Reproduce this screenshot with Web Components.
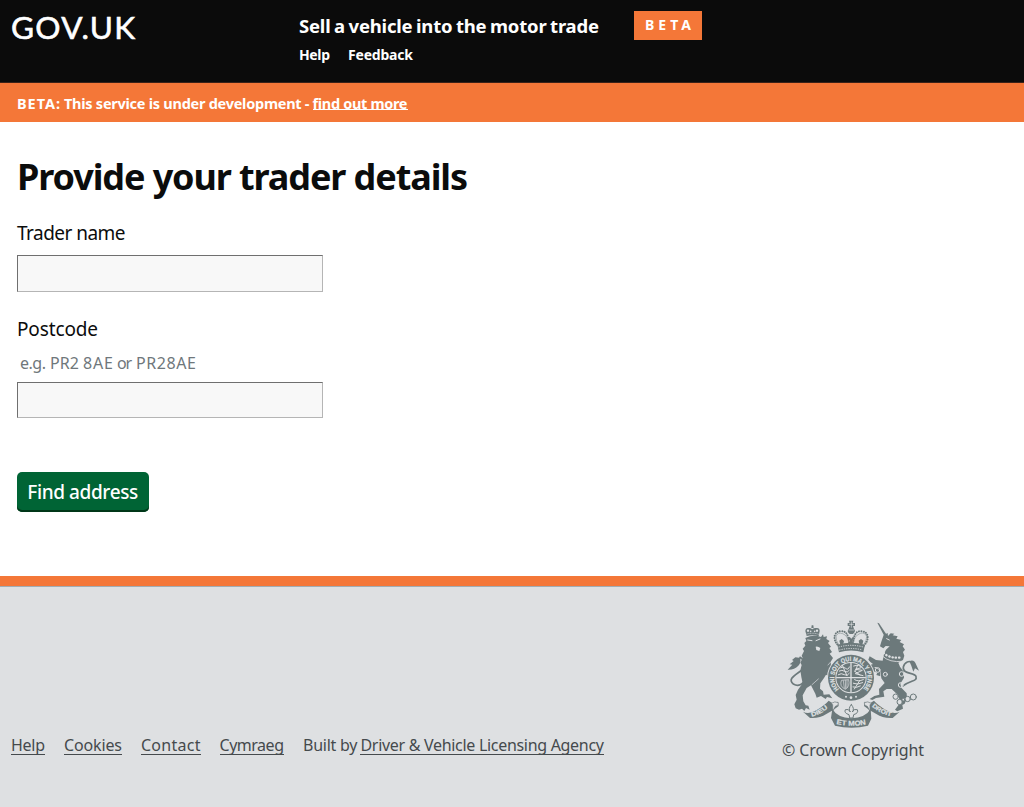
<!DOCTYPE html>
<html lang="en">
<head>
<meta charset="utf-8">
<title>Provide your trader details</title>
<style>
html,body{margin:0;height:100%}
body{font-family:"Noto Sans","Open Sans",sans-serif;color:#0b0c0c;background:#fff;overflow:hidden}
</style>
</head>
<body>
<trader-page></trader-page>
<script>
const define = (name, html, ready) => {
  const t = document.createElement('template');
  t.innerHTML = html;
  customElements.define(name, class extends HTMLElement {
    constructor() {
      super();
      this.attachShadow({mode: 'open'}).append(t.content.cloneNode(true));
    }
    connectedCallback() { if (ready) ready(this); }
  });
};

/* Text tracked so that the line fills the given measure. */
define('fit-text', `<style>:host{display:inline-block;white-space:nowrap}span{display:inline-block;white-space:pre}</style><span><slot></slot></span>`, el => {
  const w = +el.getAttribute('measure'), span = el.shadowRoot.querySelector('span');
  const natural = span.getBoundingClientRect().width;
  const n = el.textContent.length;
  const ls = (w - natural) / (n - 1);
  span.style.letterSpacing = ls + 'px';
  span.style.marginRight = -ls + 'px';
});

define('gov-header', `<style>
:host{display:grid;grid-template-columns:288px 335px 1fr;height:82px;background:#0b0b0b;color:#fff;padding-left:11px;border-bottom:1px solid #3a2118;box-sizing:content-box}
.logo{font:400 31.5px/55px Lato,sans-serif;-webkit-text-stroke:.6px #fff}
.name{font-weight:700;font-size:18.5px;line-height:52px;height:41px;word-spacing:-1px}
nav{display:flex;gap:18px;font-size:14px;line-height:27px;font-weight:700}
.tag{width:68px;height:29px;margin-top:11px;background:#f47738;display:flex;justify-content:center;font-size:14px;font-weight:700;line-height:28px}
</style>
<div class="logo"><fit-text measure="124">GOV.UK</fit-text></div>
<div><div class="name"><fit-text measure="300">Sell a vehicle into the motor trade</fit-text></div>
<nav><fit-text measure="31">Help</fit-text><fit-text measure="65">Feedback</fit-text></nav></div>
<div class="tag"><fit-text measure="46">BETA</fit-text></div>`);

define('beta-banner', `<style>
:host{display:flex;gap:4px;height:39px;padding-left:17px;background:#f47738;color:#fff;font-size:14.5px;font-weight:700;line-height:41px}
fit-text.link{height:26px;border-bottom:1px solid #fff;margin-left:-1px}
</style><fit-text measure="43">BETA:</fit-text><fit-text measure="245.5">This service is under development -</fit-text><fit-text class="link" measure="95">find out more</fit-text>`);

define('form-field', `<style>
:host{display:block}
.label{font-size:19px;line-height:26px;height:35px}
.hint{display:none;font-size:16px;line-height:26px;color:#6f777b;padding-left:3px;height:32px}
:host([hinted]) .hint{display:block}
:host([hinted]) .label{height:34px}
input{display:block;box-sizing:border-box;width:306px;height:37px;margin:0;border:1px solid;border-color:#6f6f6f #b5b5b5 #b5b5b5 #6f6f6f;border-radius:0;background:#f8f8f8;outline:0}
:host([hinted]) input{height:36px}
</style><div class="label"><slot></slot></div><div class="hint"><slot name="hint"></slot></div><input type="text">`);

define('submit-button', `<style>
:host{display:block}
button{display:block;width:131.5px;height:40px;margin:0;padding:0;border:0;border-radius:5px;background:#006435;box-shadow:inset 0 -2px #003618;color:#fff;font:500 19px/39px "Noto Sans",sans-serif}
</style><button type="button"><slot></slot></button>`);

define('trader-form', `<style>
:host{display:block;height:454px;box-sizing:border-box;padding:32px 0 0 17px}
h1{margin:0 0 18px;font-size:36px;font-weight:700;line-height:46px;height:46px}
form-field+form-field{margin-top:24px}
submit-button{margin-top:54px}
.hint{display:flex;gap:4px}
</style>
<h1><fit-text measure="451">Provide your trader details</fit-text></h1>
<form-field style="padding-top:2px"><fit-text measure="108.5">Trader name</fit-text></form-field>
<form-field hinted><fit-text measure="81">Postcode</fit-text><div class="hint" slot="hint"><fit-text measure="26">e.g.</fit-text><fit-text measure="29">PR2</fit-text><fit-text measure="30">8AE</fit-text><fit-text measure="15">or</fit-text><fit-text measure="60">PR28AE</fit-text></div></form-field>
<submit-button><fit-text measure="111">Find address</fit-text></submit-button>`);

define('royal-crest', `<style>:host{display:block;width:135px;height:111.667px}svg{display:block;width:100%;height:100%;overflow:visible}
text{font-family:"Liberation Sans",sans-serif;font-weight:700;fill:#dee0e2;stroke:#dee0e2;stroke-width:.6px}</style>
<svg viewBox="45 145 405 335" fill="#6c797b" stroke-linecap="round" stroke-linejoin="round">
<defs><path id="ring" d="M207 358.7A50 50 0 1 1 279 358.7"/><path id="sl" d="M125 441Q156 434 180 409"/><path id="sm" d="M199 463Q244 473 292 463"/><path id="sr" d="M305 410Q334 436 371 441"/></defs>
<!-- lion -->
<g>
<path d="M110 199L106 184Q107 173 117 175Q122 175 127 179Q132 174 138 175Q149 173 149 184L146 200Q128 194 110 199ZM124 175L125 167H130L131 175Z"/>
<g fill="#dee0e2"><circle cx="114" cy="183" r="3.5"/><circle cx="122" cy="185" r="2.5"/><circle cx="134" cy="185" r="2.5"/><circle cx="141" cy="183" r="3.5"/></g>
<path d="M111 193Q128 188 146 194" fill="none" stroke="#dee0e2" stroke-width="2" stroke-dasharray="1 4"/>
<path d="M106 205Q130 193 153 202L159 194L161 202L171 200L169 208L179 214L174 220L183 231L178 235L186 247L179 252L189 265L182 276L184 302L193 312L202 331L196 349L187 340L180 321L168 315L162 325L151 341L150 357L159 365L161 375L178 374L187 386L171 382L167 388L153 379L140 384L136 372L123 347L110 355L98 377L100 395L107 407L115 408L119 420L108 415L103 424L96 417L87 420L77 416L73 404L80 390L77 376L84 360L98 341L94 322L91 302L95 286L91 279L98 265L95 258L102 244L98 237L106 228L103 220L109 214Z"/>
<path d="M106 326C100 347 83 351 70 343C51 328 77 316 94 302C109 286 103 270 90 263" fill="none" stroke="#6c797b" stroke-width="5"/>
<path d="M93 265L76 263L66 271L71 274L59 284L67 285L53 300Q73 301 85 288Q93 280 91 268Z"/>
<path d="M113 211L126 213M138 213L150 208" fill="none" stroke="#dee0e2" stroke-width="3"/>
<path d="M137 231Q144 229 151 235L148 244L139 241Z" fill="#dee0e2"/>
<path d="M181 278L174 286M126 345L145 328" fill="none" stroke="#dee0e2" stroke-width="2"/>
</g>
<!-- unicorn -->
<g>
<path d="M322 159L327 161L350 195L343 199Z"/>
<path d="M341 196L353 190L354 199L362 191L373 192L368 197L383 200L379 207L394 211L389 217L402 224L398 230L405 240L399 247L403 258L399 271L385 279L390 291L401 306L402 324L391 342L394 354L410 371L411 386L404 402L397 406L399 417L382 425L375 420L385 407L390 393L383 375L365 358L350 358L340 365L343 381L318 385L307 391L299 388L313 379L328 375L327 358L344 340L334 326L331 303L318 292L301 297L298 314L288 316L288 304L292 289L309 283L301 277L295 270L299 260L318 271L338 273L342 253L348 240L359 230L347 229L340 236L330 230L334 216Z"/>
<path d="M305 293Q324 294 330 306L331 320L319 316L322 309L306 303Z"/>
<path d="M341 250Q360 268 396 263" fill="none" stroke="#dee0e2" stroke-width="7" stroke-dasharray="1 9"/>
<path d="M337 259Q358 280 398 275" fill="none" stroke="#dee0e2" stroke-width="2.5"/><path d="M350 207L358 211" stroke="#dee0e2" stroke-width="3"/>
<path d="M398 349C425 330 442 336 438 320C433 307 397 315 400 292C403 277 419 270 428 281" fill="none" stroke="#6c797b" stroke-width="5"/>
<path d="M418 275Q432 267 439 286L447 303L435 296L430 306L424 288Z"/>
<g fill="none" stroke="#dee0e2" stroke-width="3"><circle cx="325" cy="257" r="7"/><circle cx="323" cy="301" r="7"/><circle cx="346" cy="314" r="6"/><circle cx="395" cy="313" r="7"/><circle cx="392" cy="346" r="7"/></g>
<g fill="#dee0e2" stroke="#6c797b" stroke-width="3"><circle cx="377" cy="381" r="8"/><circle cx="389" cy="397" r="8"/><circle cx="413" cy="388" r="8"/><circle cx="430" cy="382" r="9"/><circle cx="400" cy="390" r="4"/></g>
</g>
<!-- shield and garter -->
<circle cx="243" cy="324" r="72" fill="#dee0e2"/><circle cx="243" cy="324" r="69"/>
<circle cx="243" cy="324" r="47" fill="#dee0e2"/><circle cx="243" cy="324" r="44"/>
<g fill="none" stroke="#dee0e2">
<path d="M243 281V367M200 324H286" stroke-width="4"/>
<path d="M212 294Q219 289 227 296T238 292M208 304Q216 299 224 305T238 302M205 315Q214 309 223 315T238 311M217 287L231 318M254 330Q263 337 280 330M250 341Q262 347 278 339M249 352Q259 356 271 349M253 358L269 333" stroke-width="3"/>
<path d="M251 289Q269 283 274 294L256 299L277 302L256 312L279 318M253 304L270 316M262 288L257 304" stroke-width="3"/>
<path d="M214 333Q207 350 226 359Q241 350 236 331ZM220 333L223 355M226 332L227 357M231 332L231 354" stroke-width="2"/>
</g>
<text font-size="19"><textPath href="#ring" textLength="232" lengthAdjust="spacingAndGlyphs">HONI SOIT QUI MAL Y PENSE</textPath></text>
<circle cx="228" cy="381" r="3" fill="#dee0e2"/><circle cx="243" cy="384" r="4" fill="#dee0e2"/><circle cx="258" cy="381" r="3" fill="#dee0e2"/>
<!-- crown -->
<path d="M204 245Q191 223 190 203Q190 182 211 180Q233 177 242 191Q251 177 274 180Q297 182 298 203Q297 223 282 245Q244 234 204 245Z" fill="#dee0e2"/>
<path d="M207 230Q191 214 194 199Q198 184 214 185Q234 182 238 221M249 221Q252 182 273 185Q290 185 293 200Q295 214 280 230" fill="none" stroke="#6c797b" stroke-width="6" stroke-dasharray=".1 7"/>
<path d="M207 227Q196 211 198 199Q204 187 218 192Q233 197 237 221M250 221Q252 198 271 191Q284 187 290 200Q291 212 280 227" fill="none" stroke="#6c797b" stroke-width="1.5"/>
<path d="M236 178L239 169H233V160H239L237 153H250L248 160H255V169H249L252 178Q259 184 249 193H239Q229 186 236 178Z"/><path d="M238 164H250M244 157V173M237 181H251" stroke="#dee0e2" stroke-width="2"/>
<path d="M202 225Q242 213 285 225L280 248Q243 237 207 248Z"/><path d="M207 232Q243 222 280 232M209 241Q243 232 278 241" fill="none" stroke="#dee0e2" stroke-width="3" stroke-dasharray="1 6"/>
<path d="M239 222L240 211L233 207L239 201L244 207L249 201L255 207L248 211L249 222ZM211 225L208 213L215 208L222 214L220 222ZM268 222L266 213L273 208L280 213L277 225Z"/>
<!-- motto ribbon -->
<path d="M99 426Q116 435 139 422Q166 405 176 393L188 401L204 396L206 409L190 421L169 433Q149 447 120 445Z"/>
<path d="M389 426Q372 435 349 422Q322 405 312 393L300 401L284 396L282 409L298 421L319 433Q339 447 368 445Z"/>
<path d="M184 401Q195 393 205 399Q208 407 196 410L188 425V406Z M304 401Q293 393 283 399Q280 407 292 410L300 425V406Z" fill="#dee0e2" stroke="#6c797b" stroke-width="2"/>
<path d="M187 418Q202 444 244 446Q287 444 302 418L304 447L294 468Q245 480 195 468L183 445Z"/>
<text font-size="18"><textPath href="#sl" textLength="56" lengthAdjust="spacingAndGlyphs">DIEU</textPath></text><text font-size="21"><textPath href="#sm" textLength="90" lengthAdjust="spacingAndGlyphs">ET MON</textPath></text><text font-size="18"><textPath href="#sr" textLength="66" lengthAdjust="spacingAndGlyphs">DROIT</textPath></text>
<path d="M244 405Q255 417 247 427Q252 416 262 420Q267 430 251 435L249 445H239L237 435Q221 430 226 420Q236 416 241 427Q233 417 244 405Z" fill="#dee0e2" stroke="#6c797b" stroke-width="3"/>
</svg>`);

define('gov-footer', `<style>
:host{display:grid;grid-template-columns:771px 142px;height:220px;padding-left:11px;border-top:10px solid #f47738;background:#dee0e2;color:#454a4d;font-size:16px;box-shadow:inset 0 1px #a1acb2}
nav{display:flex;align-items:flex-start;padding-top:146px;line-height:26px}
nav fit-text{margin-right:19px;height:22px}
nav fit-text.u{border-bottom:1px solid #454a4d;line-height:26px}
nav fit-text.by{margin-right:3px}
royal-crest{margin:32px 0 0 3px}
.copy{margin-top:6px;line-height:28px}
</style>
<nav><fit-text class="u" measure="34">Help</fit-text><fit-text class="u" measure="58">Cookies</fit-text><fit-text class="u" measure="59.5">Contact</fit-text><fit-text class="u" measure="64.5">Cymraeg</fit-text><fit-text class="by" measure="54.5">Built by</fit-text><fit-text class="u" measure="243.5">Driver &amp; Vehicle Licensing Agency</fit-text></nav>
<div><royal-crest></royal-crest><div class="copy"><fit-text measure="142">© Crown Copyright</fit-text></div></div>`);

define('trader-page', `<style>:host{display:flex;flex-direction:column;width:1024px;height:807px;overflow:hidden}gov-footer{flex:1}</style>
<gov-header></gov-header><beta-banner></beta-banner><trader-form></trader-form><gov-footer></gov-footer>`);
</script>
</body>
</html>
